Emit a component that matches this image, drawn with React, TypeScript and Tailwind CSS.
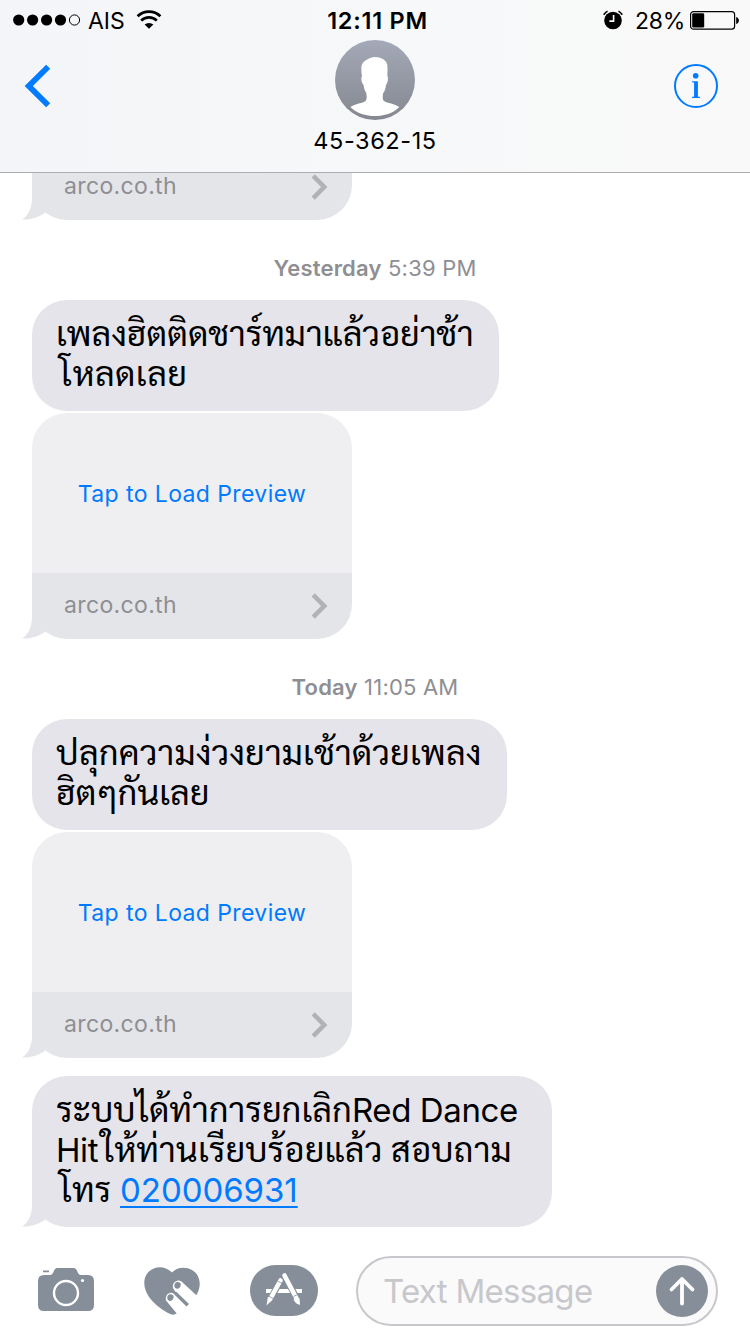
import type { ReactNode } from "react";

const StatusBar = () => {
	return (
		<div className="grid grid-cols-3 items-center h-10 text-black">
			<div className="flex items-center pl-[13px]">
				<svg width="68" height="14" viewBox="0 0 68 14">
					<circle cx="5.7" cy="7" r="5.6" />
					<circle cx="19.6" cy="7" r="5.6" />
					<circle cx="33.6" cy="7" r="5.6" />
					<circle cx="47.5" cy="7" r="5.6" />
					<circle cx="61.5" cy="7" r="5.1" fill="none" stroke="#000" />
				</svg>
				<span className="ml-[7px] w-[38px] pt-[2px] text-[23px] leading-8 whitespace-nowrap">AIS</span>
				<svg className="ml-[10px]" width="26" height="20" viewBox="0 0 26 20">
					<path d="M1.6 6.2A16.3 16.3 0 0 1 24.4 6.2" fill="none" stroke="#000" strokeWidth="2.7" />
					<path d="M5.2 10.6A11 11 0 0 1 20.8 10.6" fill="none" stroke="#000" strokeWidth="2.7" />
					<path d="M8.6 14.6A6.5 6.5 0 0 1 17.4 14.6L13 18.8Z" />
				</svg>
			</div>
			<div className="pl-[5px] pt-[2px] text-center text-[23.5px] leading-8 font-semibold tracking-[0.75px] whitespace-nowrap">12:11 PM</div>
			<div className="flex items-center justify-end pr-[10px]">
				<svg width="20" height="20" viewBox="0 0 20 20">
					<circle cx="10" cy="10.5" r="8.8" />
					<path d="M0.7 4.7A13 13 0 0 1 4.5 1.1M19.3 4.7A13 13 0 0 0 15.5 1.1" fill="none" stroke="#000" strokeWidth="1.5" />
					<path d="M10.6 5V11.1H6.4" fill="none" stroke="#fff" strokeWidth="1.6" />
				</svg>
				<span className="ml-3 w-[50px] pt-[2px] text-[23px] leading-8 tracking-[-0.2px] whitespace-nowrap">28%</span>
				<svg className="ml-[5px]" width="50" height="20" viewBox="0 0 50 20">
					<rect x="0.6" y="1.6" width="44" height="17.6" rx="3" fill="none" stroke="#000" strokeWidth="1.2" />
					<rect x="2.2" y="3.2" width="12" height="14.4" rx="1.4" />
					<path d="M46.2 7V14C49.8 13 49.8 8 46.2 7Z" />
				</svg>
			</div>
		</div>
	);
};

const Avatar = () => {
	return (
		<svg width="80" height="80" viewBox="0 0 80 80">
			<defs>
				<linearGradient id="avatar" x1="0" y1="0" x2="0" y2="1">
					<stop offset="0" stopColor="#a4a9b8" />
					<stop offset="1" stopColor="#858890" />
				</linearGradient>
			</defs>
			<circle cx="40" cy="40" r="40" fill="url(#avatar)" />
			<path
				d="M39.5 17C45 16.8 51.5 19.5 52.3 25C52.8 29 52.3 32 52.4 36.5C53.6 37.5 52.8 43 51 45C50.6 48 50 51 48 53.5C47.6 57 47.5 60 49 61C52 63.2 60 63.7 64.3 67C58 73.5 49 76 40 76C31 76 22 73.5 15.3 67C20 63.7 28 63.2 30.5 61C32 60 31.8 56 31.3 53C29.6 50.5 29 48 28.6 45C26.6 43 25.6 37.5 27 36.5C26.4 31 25.8 26 27.5 23.5C30 20 35 17.5 39.5 17Z"
				fill="#fff"
			/>
		</svg>
	);
};

const Header = () => {
	return (
		<header className="h-[173px] shrink-0 border-b border-[#acacae] bg-linear-to-r from-[#f4f5f8] via-[#f7f8f9] to-[#f9f9f9]">
			<StatusBar />
			<div className="grid grid-cols-3">
				<svg className="ml-6 mt-6" width="28" height="44" viewBox="0 0 28 44">
					<path d="M24.2 2.8L4.8 22L24.2 41.2" fill="none" stroke="#007aff" strokeWidth="5.8" />
				</svg>
				<div className="flex flex-col items-center">
					<Avatar />
					<span className="mt-[5px] text-[23.5px] leading-8 tracking-[0.6px] whitespace-nowrap">45-362-15</span>
				</div>
				<svg className="ml-auto mr-8 mt-6" width="44" height="44" viewBox="0 0 44 44">
					<circle cx="22" cy="22" r="21" fill="none" stroke="#007aff" strokeWidth="2" />
					<circle cx="21.7" cy="11.7" r="2.8" fill="#007aff" />
					<path d="M18 17.2H23.9V32.4L26 33V34H18V33L20.1 32.4V18.6L18 18.2Z" fill="#007aff" />
				</svg>
			</div>
		</header>
	);
};

const Tail = ({ color }: { color: string }) => {
	return (
		<svg className="absolute bottom-0 -left-[10px]" width="30" height="36" viewBox="0 0 30 36">
			<path d="M10 0V14C10 24 6 32 0 35.6C9 35.8 17 33 23.5 28.4Z" fill={color} />
		</svg>
	);
};

const Chevron = () => {
	return (
		<svg width="18" height="28" viewBox="0 0 18 28">
			<path d="M2.2 2.8L13.2 14L2.2 25.2" fill="none" stroke="#b2b2b6" strokeWidth="4.6" />
		</svg>
	);
};

const Stamp = ({ day, time }: { day: string; time: string }) => {
	return (
		<div className="h-8 leading-8 text-center text-[22px] tracking-[0.2px] text-[#8e8e93]">
			<span className="font-semibold">{day}</span> {time}
		</div>
	);
};

const LinkFooter = () => {
	return (
		<div className="relative h-[66px] rounded-b-[35px] bg-[#e4e5e9]">
			<Tail color="#e4e5e9" />
			<div className="flex items-center justify-between h-full pl-8 pr-[23px]">
				<span className="text-[23px] tracking-[0.35px] text-[#8e8e93] pb-[2px]">arco.co.th</span>
				<Chevron />
			</div>
		</div>
	);
};

const Preview = () => {
	return (
		<div className="w-80">
			<div className="flex items-center justify-center h-40 rounded-t-[35px] bg-[#efeff1] pt-[2px] text-[23px] tracking-[0.4px] text-[#007aff]">
				Tap to Load Preview
			</div>
			<LinkFooter />
		</div>
	);
};

const Bubble = ({ className, tail, children }: { className: string; tail?: boolean; children: ReactNode }) => {
	return (
		<div className={`relative rounded-[35px] bg-[#e5e4ea] pl-6 pt-[14px] text-[33px] leading-10 tracking-[-0.4px] whitespace-nowrap text-black ${className}`}>
			{tail && <Tail color="#e5e4ea" />}
			{children}
		</div>
	);
};

const Thai = ({ className = "tracking-[-0.1px]", children }: { className?: string; children: ReactNode }) => {
	return <span className={`font-['Sarabun','Noto_Sans_Thai_Looped',sans-serif] text-[34.5px] leading-none ${className}`}>{children}</span>;
};

const Toolbar = () => {
	return (
		<footer className="flex items-center h-[86px] shrink-0 pl-[38px] pr-8 pb-[1px]">
			<svg className="mb-[3px]" width="56" height="44" viewBox="0 0 56 44">
				<path d="M5 3.5H11V5.2H5ZM6 8H12C16.5 8 14.5 1 20 1H35C40.5 1 38.5 8 43 8H50Q56 8 56 14V38Q56 44 50 44H6Q0 44 0 38V14Q0 8 6 8Z" fill="#858e99" />
				<circle cx="28" cy="26" r="12" fill="none" stroke="#fff" strokeWidth="2.4" />
				<circle cx="44.5" cy="13.5" r="1.6" fill="#fff" />
			</svg>
			<svg className="ml-[50px]" width="57" height="48" viewBox="0 0 57 48">
				<path d="M28 5.5C33 -.5 42 -.5 48 3C56 7.5 58 18 53 27C48 36 40 43 31 47.3Q28 48.3 25 46.5C13 40 0.3 29 0.3 16C0.3 1 18 -5 28 5.5Z" fill="#858e99" />
				{/* two fingers over the heart */}
				<path d="M29.2 21.5C27.5 16 33 11.5 37.5 14.5L56.5 32L52 34L43 42Z" fill="#fff" />
				<path d="M22 33.5C20.5 28 26 23.5 30 26.8L44 40.5L34 48Z" fill="#fff" />
				<path d="M32 24.5L45 37L42.5 39.5L29.5 26.5Z" fill="#858e99" />
				<path d="M33.5 45.5L35.5 40L40 44Z" fill="#fff" />
				<path d="M30.3 19C30.3 14.5 34 14.2 36.6 16.2C37.2 18.5 36 21.5 33.3 21.8C31.5 21.8 30.5 20.5 30.3 19Z" fill="#858e99" />
				<path d="M23.2 31C23.2 26.7 27 26.4 29.4 28.4C30 30.7 28.8 33.6 26.2 33.9C24.4 33.9 23.4 32.5 23.2 31Z" fill="#858e99" />
			</svg>
			<svg className="ml-[49px]" width="68" height="51" viewBox="0 0 68 51">
				<rect width="68" height="51" rx="25.5" fill="#858e99" />
				<path d="M16 24H52V28H16Z" fill="#fff" />
				<path d="M30.5 15.5L20.5 34M34.5 10.5L46.5 33" stroke="#858e99" strokeWidth="6.6" />
				<path d="M30.5 15.5L20.2 34M34.5 10.5L46.3 33" stroke="#fff" strokeWidth="4.6" strokeLinecap="round" />
				<path d="M17.9 32L22.6 34.6L16.5 40.5ZM43.6 34.5C45.5 32 49 32 49.6 34L50 40C47.5 39.5 44.5 37.5 43.6 34.5Z" fill="#fff" />
				<path d="M27.5 16L32 18.5M43.5 31.5L48.5 29M18.5 31L23 33.5" stroke="#858e99" strokeWidth=".8" />
			</svg>
			<div className="flex items-center justify-between ml-[38px] w-[362px] h-[70px] rounded-full border-2 border-[#c7c7cc] bg-[#fafafa] pl-[25px] pr-2">
				<span className="pt-[2px] text-[33px] tracking-[-0.7px] text-[#c7c7cc] whitespace-nowrap">Text Message</span>
				<svg width="52" height="52" viewBox="0 0 52 52">
					<circle cx="26" cy="26" r="26" fill="#858e99" />
					<path d="M26 38.5V14M15.5 24.5L26 14L36.5 24.5" fill="none" stroke="#fff" strokeWidth="3.8" strokeLinecap="round" strokeLinejoin="round" />
				</svg>
			</div>
		</footer>
	);
};

const App = () => {
	return (
		<div className="flex flex-col w-[750px] h-[1334px] overflow-hidden bg-white font-['Inter',sans-serif]">
			<Header />
			<main className="flex flex-col flex-1 min-h-0 overflow-hidden">
				<div className="-mt-[19px] ml-8 w-80 shrink-0">
					<LinkFooter />
				</div>
				<div className="mt-8 shrink-0">
					<Stamp day="Yesterday" time="5:39 PM" />
				</div>
				<div className="mt-4 ml-8 shrink-0">
					<Bubble className="w-[467px] h-[111px]">
						<p><Thai>เพลงฮิตติดชาร์ทมาแล้วอย่าช้า</Thai></p>
						<p className="pl-[3px]"><Thai className="tracking-[0.35px]">โหลดเลย</Thai></p>
					</Bubble>
					<div className="mt-[2px]">
						<Preview />
					</div>
				</div>
				<div className="mt-8 shrink-0">
					<Stamp day="Today" time="11:05 AM" />
				</div>
				<div className="mt-4 ml-8 shrink-0">
					<Bubble className="w-[475px] h-[111px]">
						<p><Thai className="tracking-[0.12px]">ปลุกความง่วงยามเช้าด้วยเพลง</Thai></p>
						<p><Thai>ฮิตๆกันเลย</Thai></p>
					</Bubble>
					<div className="mt-[2px]">
						<Preview />
					</div>
				</div>
				<div className="mt-[18px] ml-8 shrink-0">
					<Bubble className="w-[520px] h-[151px]" tail>
						<p><Thai className="tracking-[-0.03px]">ระบบได้ทำการยกเลิก</Thai>Red Dance</p>
						<p>Hit<Thai className="pl-[3px] tracking-[0.08px]">ให้ท่านเรียบร้อยแล้ว สอบถาม</Thai></p>
						<p className="pl-[3px]">
							<Thai>โทร</Thai> <a className="tracking-[-0.05px] text-[#007aff] underline decoration-2 underline-offset-4">020006931</a>
						</p>
					</Bubble>
				</div>
			</main>
			<Toolbar />
		</div>
	);
};

export default App;
